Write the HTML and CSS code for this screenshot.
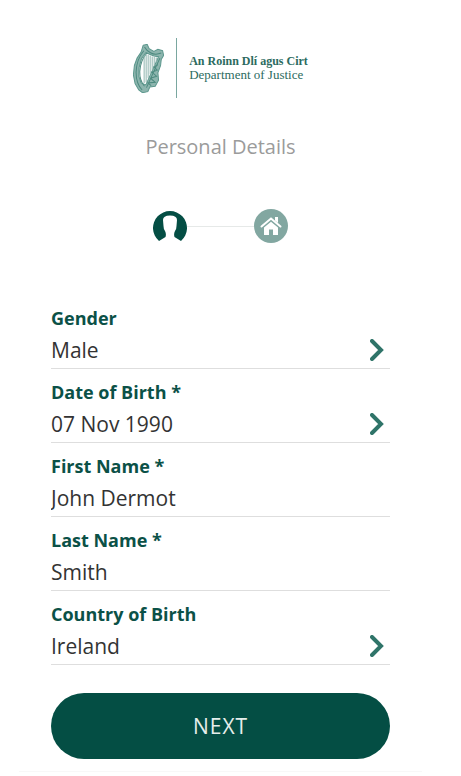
FILE: index.html
```
<!DOCTYPE html>
<html lang="en">
<head>
  <meta charset="UTF-8">
  <meta name="viewport" content="width=device-width, initial-scale=1.0">
  <title>Personal Details</title>
  <link rel="stylesheet" href="styles.css">
</head>
<body>
  <main class="page">
    <header class="brand">
      <svg class="harp" viewBox="0 0 92 146" aria-hidden="true">
        <path class="harp-fill" d="M30 4 L42 1 L48 14 L62 22 L74 16 L88 20 L91 34 L84 46 L82 64 L74 86 L76 108 L66 126 L50 128 L44 142 L28 145 L17 137 L6 118 L1 92 L4 64 L12 42 L24 24 Z M38 26 L25 44 L18 70 L17 96 L24 116 L38 122 L76 38 L62 36 Z"/>
        <path class="harp-line" d="M34 9 Q40 20 52 26 Q66 34 84 27 M32 20 Q10 46 9 84 Q9 118 27 137 M42 26 Q22 48 20 82 Q19 108 34 126 M80 42 L40 130 M74 62 L62 68 L72 78 L56 84 L70 96 L52 102 L66 114 L44 116 L54 124"/>
        <path class="harp-string" d="M33 36V116M39 32V114M45 32V102M51 34V90M57 37V78M63 39V66M69 40V54"/>
      </svg>
      <div class="brand-text">
        <strong>An Roinn Dlí agus Cirt</strong>
        <span>Department of Justice</span>
      </div>
    </header>

    <h1>Personal Details</h1>

    <div class="steps">
      <svg class="step" viewBox="0 0 34 34" role="img" aria-label="Personal details">
        <path class="step-current" d="M6 32 A17 17 0 1 1 28 32 L21.500 28 Q20.500 25 22 22 Q23.500 20 23.500 17 L24 11 Q24 6.500 17 6.500 Q10 6.500 10 11 L10.500 17 Q10.500 20 12 22 Q13.500 25 12.500 28 Z"/>
      </svg>
      <span class="step-line"></span>
      <svg class="step" viewBox="0 0 34 34" role="img" aria-label="Address">
        <circle class="step-next" cx="17" cy="17" r="17"/>
        <path class="house-roof" d="M7.5 17.5 L17 9.5 L26.5 17.5"/>
        <path class="house" d="M21 8h3v6l-3-2.500z M10 18.500 L17 12.800 L24 18.500 V26 H19 V20.500 H15 V26 H10 Z"/>
      </svg>
    </div>

    <form class="details">
      <div class="field">
        <label for="gender">Gender</label>
        <div class="control">
          <select id="gender">
            <option>Male</option>
            <option>Female</option>
          </select>
          <svg class="chevron" viewBox="0 0 14 22" aria-hidden="true"><path d="M2 2l9 9-9 9"/></svg>
        </div>
      </div>
      <div class="field">
        <label for="birth-date">Date of Birth *</label>
        <div class="control">
          <input type="text" id="birth-date" value="07 Nov 1990" readonly required>
          <svg class="chevron" viewBox="0 0 14 22" aria-hidden="true"><path d="M2 2l9 9-9 9"/></svg>
        </div>
      </div>
      <div class="field">
        <label for="first-name">First Name *</label>
        <div class="control">
          <input type="text" id="first-name" value="John Dermot" required>
        </div>
      </div>
      <div class="field">
        <label for="last-name">Last Name *</label>
        <div class="control">
          <input type="text" id="last-name" value="Smith" required>
        </div>
      </div>
      <div class="field">
        <label for="country">Country of Birth</label>
        <div class="control">
          <select id="country">
            <option>Ireland</option>
            <option>United Kingdom</option>
          </select>
          <svg class="chevron" viewBox="0 0 14 22" aria-hidden="true"><path d="M2 2l9 9-9 9"/></svg>
        </div>
      </div>
      <button type="submit">NEXT</button>
    </form>
  </main>
</body>
</html>
```

FILE: styles.css
```
* {
  box-sizing: border-box;
}
body {
  margin: 0;
  background: #fff;
  color: #333;
  font-family: "Open Sans", "Noto Sans", sans-serif;
}
.page {
  margin: 0 39px 0 19px;
  padding: 38px 32px 12px;
  border-bottom: 1px solid #f8f8f8;
}

/* Logo */
.brand {
  display: flex;
  justify-content: center;
  align-items: center;
  gap: 12px;
}
.harp {
  width: 31px;
  height: 49px;
}
.harp-fill {
  fill: #8db5ae;
  fill-rule: evenodd;
  stroke: #5c978d;
  stroke-width: 3;
}
.harp-line {
  fill: none;
  stroke: #4c8a7f;
  stroke-width: 3;
}
.harp-string {
  stroke: #8fb5af;
  stroke-width: 3;
}
.brand-text {
  display: flex;
  flex-direction: column;
  justify-content: center;
  height: 60px;
  padding-left: 12px;
  border-left: 1px solid #7aa7a0;
  color: #2c6b60;
  font-family: "Liberation Serif", serif;
  font-size: 13px;
  line-height: 13px;
}
.brand-text strong {
  font-size: 12px;
}

h1 {
  margin: 35px 0 0;
  color: #9b9b9b;
  font-size: 20px;
  font-weight: 400;
  line-height: 28px;
  text-align: center;
}

/* Steps */
.steps {
  display: flex;
  justify-content: center;
  align-items: center;
  margin-top: 48px;
}
.step {
  width: 34px;
  height: 34px;
}
.step-current {
  fill: #044e44;
}
.step-next {
  fill: #82a7a1;
}
.step-line {
  width: 67px;
  height: 1px;
  background: #e6e9e8;
}
.house {
  fill: #fff;
}
.house-roof {
  fill: none;
  stroke: #fff;
  stroke-width: 2;
  stroke-linecap: round;
}

/* Form */
.details {
  margin-top: 52px;
}
.field {
  padding-top: 10px;
  border-bottom: 1px solid #dedede;
}
label {
  display: block;
  color: #0b5147;
  font-size: 18px;
  font-weight: 700;
  line-height: 26px;
}
.control {
  display: flex;
  align-items: center;
  height: 37px;
  padding-right: 6px;
}
select,
input {
  flex: 1;
  min-width: 0;
  height: 37px;
  padding: 0;
  border: none;
  outline: none;
  appearance: none;
  background: transparent;
  color: #333;
  font-family: inherit;
  font-size: 21px;
}
.chevron {
  width: 14px;
  height: 22px;
}
.chevron path {
  fill: none;
  stroke: #2f7469;
  stroke-width: 4;
  stroke-linecap: round;
}
button {
  display: block;
  width: 100%;
  height: 66px;
  margin-top: 28px;
  border: none;
  border-radius: 33px;
  background: #044e44;
  color: #e6eeec;
  font-family: inherit;
  font-size: 21px;
  letter-spacing: 1px;
  cursor: pointer;
}
```
